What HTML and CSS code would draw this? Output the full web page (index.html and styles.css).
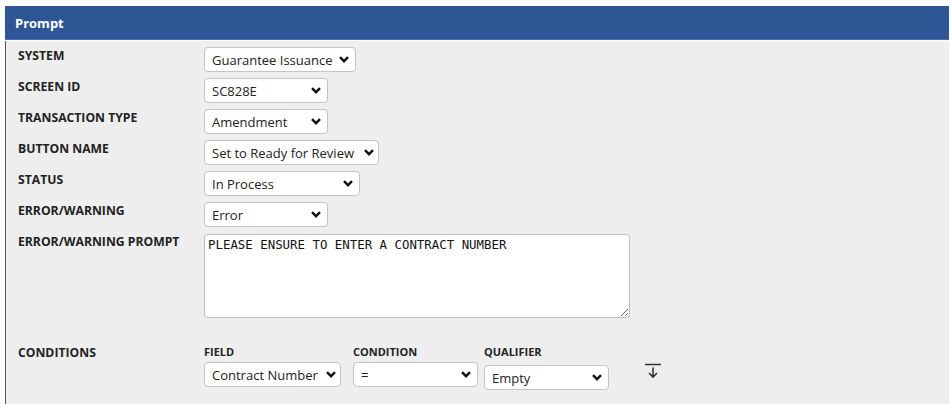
FILE: index.html
```html
<!DOCTYPE html>
<html lang="en">
<head>
  <meta charset="UTF-8" />
  <meta name="viewport" content="width=device-width, initial-scale=1.0"/>
  <title>Prompt</title>
  <link rel="stylesheet" href="styles.css">
</head>
<body>
  <div class="panel">
    <div class="panel-header">Prompt</div>

    <div class="panel-body">
      <div class="form-row">
        <label class="field-label">SYSTEM</label>
        <div class="select w-system">
          <span>Guarantee Issuance</span>
          <svg class="chevron" viewBox="0 0 10 7"><path d="M1 1.2 L5 5.2 L9 1.2" /></svg>
        </div>
      </div>

      <div class="form-row">
        <label class="field-label">SCREEN ID</label>
        <div class="select w-short">
          <span>SC828E</span>
          <svg class="chevron" viewBox="0 0 10 7"><path d="M1 1.2 L5 5.2 L9 1.2" /></svg>
        </div>
      </div>

      <div class="form-row">
        <label class="field-label">TRANSACTION TYPE</label>
        <div class="select w-short">
          <span>Amendment</span>
          <svg class="chevron" viewBox="0 0 10 7"><path d="M1 1.2 L5 5.2 L9 1.2" /></svg>
        </div>
      </div>

      <div class="form-row">
        <label class="field-label">BUTTON NAME</label>
        <div class="select w-button">
          <span>Set to Ready for Review</span>
          <svg class="chevron" viewBox="0 0 10 7"><path d="M1 1.2 L5 5.2 L9 1.2" /></svg>
        </div>
      </div>

      <div class="form-row">
        <label class="field-label">STATUS</label>
        <div class="select w-status">
          <span>In Process</span>
          <svg class="chevron" viewBox="0 0 10 7"><path d="M1 1.2 L5 5.2 L9 1.2" /></svg>
        </div>
      </div>

      <div class="form-row">
        <label class="field-label">ERROR/WARNING</label>
        <div class="select w-short">
          <span>Error</span>
          <svg class="chevron" viewBox="0 0 10 7"><path d="M1 1.2 L5 5.2 L9 1.2" /></svg>
        </div>
      </div>

      <div class="form-row">
        <label class="field-label">ERROR/WARNING PROMPT</label>
        <textarea class="prompt-text">PLEASE ENSURE TO ENTER A CONTRACT NUMBER</textarea>
      </div>

      <div class="form-row conditions">
        <label class="field-label">CONDITIONS</label>
        <div class="cond-grid">
          <div class="cond-col">
            <div class="cond-head">FIELD</div>
            <div class="select w-field">
              <span>Contract Number</span>
              <svg class="chevron" viewBox="0 0 10 7"><path d="M1 1.2 L5 5.2 L9 1.2" /></svg>
            </div>
          </div>
          <div class="cond-col">
            <div class="cond-head">CONDITION</div>
            <div class="select w-cond">
              <span>=</span>
              <svg class="chevron" viewBox="0 0 10 7"><path d="M1 1.2 L5 5.2 L9 1.2" /></svg>
            </div>
          </div>
          <div class="cond-col">
            <div class="cond-head">QUALIFIER</div>
            <div class="select w-cond lower">
              <span>Empty</span>
              <svg class="chevron" viewBox="0 0 10 7"><path d="M1 1.2 L5 5.2 L9 1.2" /></svg>
            </div>
          </div>
          <button class="icon-btn" title="Move down">
            <svg viewBox="0 0 18 16"><path d="M1 1.5 H17 M9 4.5 V14 M5 10 L9 14 L13 10" /></svg>
          </button>
        </div>
      </div>
    </div>
  </div>
</body>
</html>
```

FILE: styles.css
```css
body {
  margin: 0;
  padding: 6px 3px 8px 5px;
  background: #fff;
  font-family: 'Open Sans', 'Noto Sans', sans-serif;
  color: #222;
}
.panel {
  background: #eeeeee;
  border-left: 1px solid #555;
  height: 398px;
  box-sizing: border-box;
}
.panel-header {
  background: #2e5695;
  color: #fff;
  font-size: 13px;
  font-weight: 700;
  height: 34px;
  line-height: 34px;
  padding-left: 10px;
  border-bottom: 1px solid #4a6fb0;
  box-shadow: 0 1px 0 #fff;
  box-sizing: border-box;
  margin-left: -1px;
}
.panel-body {
  padding: 7px 0 0 12px;
  display: flex;
  flex-direction: column;
  gap: 6px;
}
.form-row {
  display: grid;
  grid-template-columns: 186px auto;
  align-items: start;
  justify-items: start;
}
.field-label {
  font-size: 12.2px;
  font-weight: 700;
  line-height: 17px;
  color: #222;
}
.select {
  height: 25px;
  box-sizing: border-box;
  background: #fff;
  border: 1px solid #c4c4c4;
  border-radius: 4px;
  display: flex;
  align-items: center;
  justify-content: space-between;
  padding: 0 6px 0 7px;
  font-size: 13px;
  color: #222;
  white-space: nowrap;
}
.chevron {
  width: 10px;
  height: 7px;
  fill: none;
  stroke: #111;
  stroke-width: 2.4;
  flex-shrink: 0;
}
.w-system { width: 152px; }
.w-short { width: 124px; }
.w-button { width: 175px; padding-right: 4px; }
.w-status { width: 156px; }
.w-field { width: 137px; padding-right: 4px; }
.w-cond { width: 125px; }
.lower { margin-top: 3px; }
.prompt-text {
  width: 426px;
  height: 84px;
  box-sizing: border-box;
  margin: 1px 0 0;
  padding: 2px 3px;
  border: 1px solid #bdbdbd;
  border-radius: 4px;
  background: #fff;
  font-family: 'DejaVu Sans Mono', 'Liberation Mono', monospace;
  font-size: 12.4px;
  line-height: 15px;
  color: #111;
  resize: both;
}
.conditions {
  margin-top: 20px;
}
.cond-grid {
  display: flex;
  align-items: start;
}
.cond-col {
  display: flex;
  flex-direction: column;
  gap: 3px;
  margin-right: 12px;
}
.cond-col + .cond-col {
  margin-right: 6px;
}
.cond-col:nth-child(3) {
  margin-right: 0;
}
.cond-head {
  font-size: 11px;
  font-weight: 700;
  line-height: 15px;
  color: #222;
}
.icon-btn {
  margin: 19px 0 0 35px;
  padding: 0;
  border: none;
  background: none;
  width: 18px;
  height: 16px;
  cursor: pointer;
}
.icon-btn svg {
  width: 18px;
  height: 16px;
  fill: none;
  stroke: #333;
  stroke-width: 1.6;
}
```
